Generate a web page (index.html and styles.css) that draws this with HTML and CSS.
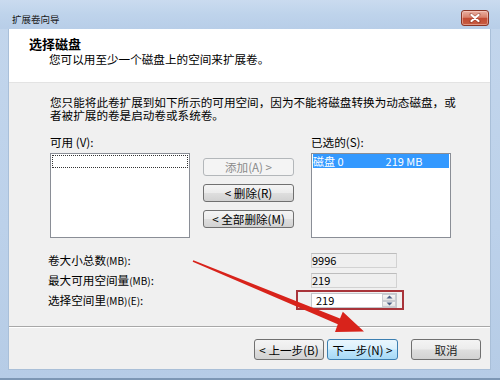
FILE: index.html
```html
<!DOCTYPE html>
<html lang="zh-CN">
<head>
<meta charset="utf-8">
<title>扩展卷向导</title>
<link rel="stylesheet" href="styles.css">
</head>
<body>
<div class="window">
  <div class="titlebar">
    <span class="title">扩展卷向导</span>
    <span class="close">
      <svg width="12" height="10" viewBox="0 0 12 10">
        <path d="M2 1.5 L10 8.5 M10 1.5 L2 8.5" stroke="#5a1a10" stroke-width="3.2" stroke-linecap="round" opacity="0.35"/>
        <path d="M2.5 2 L9.5 8 M9.5 2 L2.5 8" stroke="#ffffff" stroke-width="2.2" stroke-linecap="round"/>
      </svg>
    </span>
  </div>
  <div class="client">
    <div class="header">
      <div class="h-title">选择磁盘</div>
      <div class="h-sub">您可以用至少一个磁盘上的空间来扩展卷。</div>
    </div>
    <div class="content">
      <p class="intro">您只能将此卷扩展到如下所示的可用空间，因为不能将磁盘转换为动态磁盘，或<br>者被扩展的卷是启动卷或系统卷。</p>
      <div class="lists">
        <div class="col">
          <div class="lbl">可用 (V):</div>
          <div class="listbox"><div class="focus-row"></div></div>
        </div>
        <div class="mid">
          <button class="btn disabled">添加(A) &gt;</button>
          <button class="btn">&lt; 删除(R)</button>
          <button class="btn">&lt; 全部删除(M)</button>
        </div>
        <div class="col right">
          <div class="lbl">已选的(S):</div>
          <div class="listbox"><div class="row sel"><span>磁盘 0</span><span class="size">219 MB</span></div></div>
        </div>
      </div>
      <div class="form">
        <span class="flabel">卷大小总数<small>(MB)</small>:</span>
        <span class="field ro">9996</span>
        <span class="flabel">最大可用空间量<small>(MB)</small>:</span>
        <span class="field ro">219</span>
        <span class="flabel">选择空间里<small>(MB)(E)</small>:</span>
        <span class="field spin"><span class="val">219</span>
          <span class="spinbtns">
            <span class="sb"><svg width="7" height="4" viewBox="0 0 7 4"><path d="M0.5 3.5 L3.5 0.5 L6.5 3.5 Z" fill="#4d6185"/></svg></span>
            <span class="sb"><svg width="7" height="4" viewBox="0 0 7 4"><path d="M0.5 0.5 L3.5 3.5 L6.5 0.5 Z" fill="#4d6185"/></svg></span>
          </span>
        </span>
      </div>
    </div>
    <div class="footer">
      <button class="fbtn">&lt; 上一步(B)</button>
      <button class="fbtn primary">下一步(N) &gt;</button>
      <button class="fbtn cancel">取消</button>
    </div>
  </div>
  <div class="redbox"></div>
  <svg class="arrow" width="500" height="380" viewBox="0 0 500 380">
    <polygon points="193.3,260.3 340.0,318.6 342.8,311.7 364,331.5 335.0,332.0 337.8,324.3 192.7,261.7" fill="#d8231b"/>
  </svg>
</div>
</body>
</html>
```

FILE: styles.css
```css
* { box-sizing: border-box; }

html, body {
  margin: 0;
  padding: 0;
  background: #b9cfe8;
}

body {
  font-family: "Noto Sans CJK SC", "Noto Sans", sans-serif;
  color: #000;
}

.window {
  position: relative;
  width: 500px;
  height: 380px;
  display: flex;
  flex-direction: column;
  padding: 0 9px 8px 8px;
  background: linear-gradient(to bottom, #c3d6ec 0%, #bcd1ea 60%, #b6cce6 100%);
  border-bottom: 2px solid #7d97b4;
}

.titlebar {
  height: 29px;
  display: flex;
  justify-content: space-between;
  align-items: flex-start;
  margin: 0 -9px 0 -8px;
  padding: 0 11px 0 12px;
  background: linear-gradient(to bottom, #cadbef 0%, #bed3eb 50%, #b8cee8 100%);
}

.title {
  font-size: 9.5px;
  line-height: 10px;
  margin-top: 14px;
  color: #1a1a1a;
}

.close {
  margin-top: 10px;
  width: 28px;
  height: 16px;
  border: 1px solid #8a3526;
  border-radius: 3px;
  background: linear-gradient(to bottom, #eab0a2 0%, #d8806b 45%, #c24b33 52%, #c85d42 100%);
  display: flex;
  align-items: center;
  justify-content: center;
  box-shadow: inset 0 0 0 1px rgba(255, 220, 210, 0.45);
}

.client {
  flex: 1;
  display: flex;
  flex-direction: column;
  background: #f0f0f0;
  border-left: 1px solid #a9bfd8;
  border-right: 1px solid #a9bfd8;
  border-bottom: 1px solid #a9bfd8;
}

.header {
  height: 54px;
  background: #ffffff;
  padding: 8px 0 0 20px;
  border-bottom: 1px solid #e3e3e3;
}

.h-title {
  font-size: 13px;
  font-weight: bold;
  line-height: 14px;
}

.h-sub {
  font-size: 11.6px;
  line-height: 12px;
  margin: 2px 0 0 20px;
}

.content {
  padding-left: 41px;
}

.intro {
  margin: 13px 0 0 0;
  font-size: 11.6px;
  line-height: 13px;
}

.lists {
  margin-top: 14px;
  display: flex;
  align-items: flex-start;
}

.col {
  width: 140px;
}

.col.right {
  margin-left: 17px;
  width: 140px;
}

.lbl {
  font-size: 11.6px;
  line-height: 12px;
  height: 12px;
  margin-bottom: 5px;
}

.listbox {
  height: 85px;
  background: #ffffff;
  border: 1px solid #8a8e96;
  padding: 0 1px;
}

.focus-row {
  height: 13px;
  margin-top: 1px;
  border: 1px dotted #333;
}

.row {
  height: 14px;
  display: flex;
  font-size: 11px;
  line-height: 14px;
  padding-left: 0;
}

.row.sel {
  background: #3399ff;
  color: #ffffff;
}

.row .size {
  margin-left: 42px;
}

.mid {
  width: 91px;
  margin-left: 13px;
  padding-top: 22px;
  display: flex;
  flex-direction: column;
  gap: 8px;
}

.btn {
  height: 18px;
  padding: 0;
  font-family: "Noto Sans CJK SC", "Noto Sans", sans-serif;
  font-size: 11.6px;
  line-height: 14px;
  color: #000;
  border: 1px solid #707070;
  border-radius: 3px;
  background: linear-gradient(to bottom, #f4f4f4 0%, #ececec 48%, #dedede 52%, #d2d2d2 100%);
}

.btn.disabled {
  color: #8a8a8a;
  border-color: #b3b7ba;
  background: #f4f4f4;
}

.form {
  margin: 15px 0 0 -2px;
  display: grid;
  grid-template-columns: 263px 86px;
  grid-auto-rows: 15px;
  row-gap: 5px;
  align-items: center;
}

.flabel {
  font-size: 11.6px;
  line-height: 12px;
  white-space: nowrap;
}

.flabel small {
  font-size: 10px;
}

.field {
  height: 15px;
  font-size: 11px;
  line-height: 13px;
  border: 1px solid #d2d2d2;
  border-top-color: #bdbdbd;
}

.field.ro {
  background: #efefef;
  padding-left: 0;
}

.field.spin {
  background: #ffffff;
  border-color: #c4c7cc;
  display: flex;
  justify-content: space-between;
  padding-left: 4px;
}

.spinbtns {
  width: 14px;
  display: flex;
  flex-direction: column;
}

.sb {
  flex: 1;
  display: flex;
  align-items: center;
  justify-content: center;
  border: 1px solid #c9ccd2;
  background: linear-gradient(to bottom, #f6f6f6, #e4e4e4);
}

.footer {
  margin-top: auto;
  height: 43px;
  border-top: 1px solid #a8a8a8;
  box-shadow: inset 0 1px 0 #ffffff;
  display: flex;
  justify-content: flex-end;
  align-items: flex-start;
  padding: 12px 9px 0 0;
}

.fbtn {
  width: 70px;
  height: 21px;
  padding: 0;
  font-family: "Noto Sans CJK SC", "Noto Sans", sans-serif;
  font-size: 11.6px;
  line-height: 14px;
  color: #000;
  border: 1px solid #707070;
  border-radius: 3px;
  background: linear-gradient(to bottom, #f4f4f4 0%, #ececec 48%, #dedede 52%, #d2d2d2 100%);
}

.fbtn.primary {
  width: 71px;
  margin-left: 3px;
  border-color: #3c7fb1;
  background: linear-gradient(to bottom, #eaf6fd 0%, #d9f0fc 48%, #bee6fd 52%, #a7d9f5 100%);
}

.fbtn.cancel {
  margin-left: 13px;
  color: #222;
}

.redbox {
  position: absolute;
  left: 296px;
  top: 290px;
  width: 108px;
  height: 20px;
  border: 2px solid #a8343a;
}

.arrow {
  position: absolute;
  left: 0;
  top: 0;
  pointer-events: none;
}
```
